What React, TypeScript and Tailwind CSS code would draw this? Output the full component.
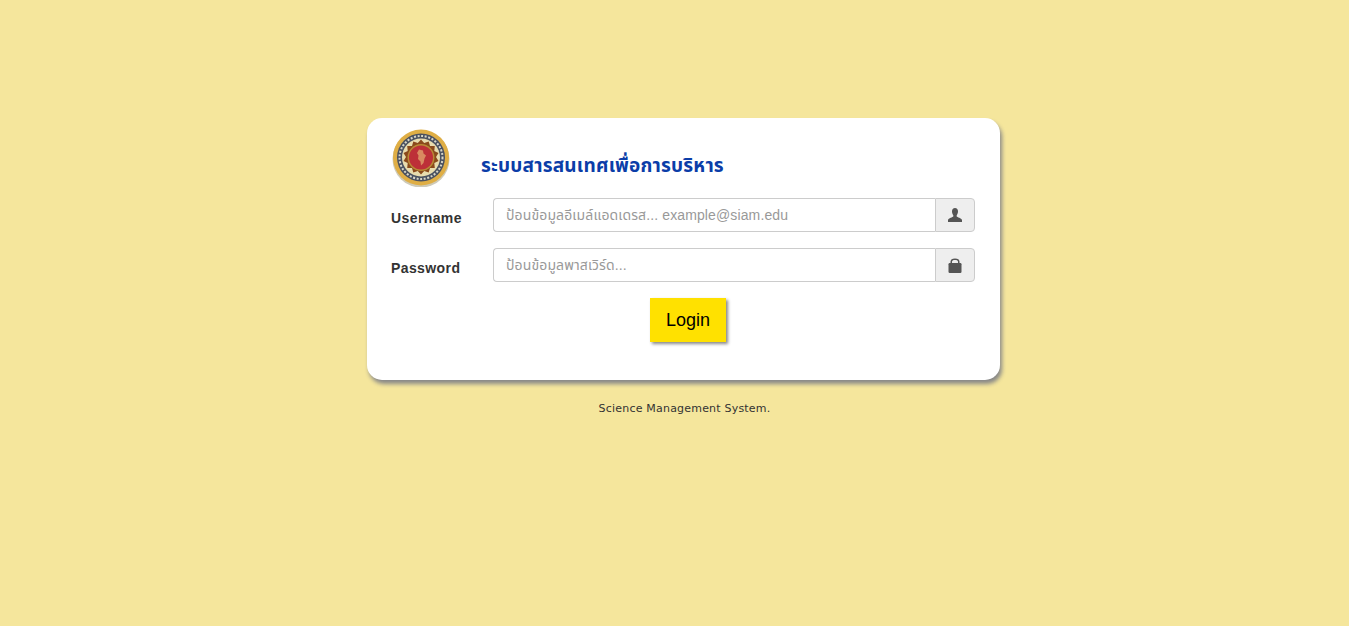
import React from "react";

const thaiStack = "font-['Liberation_Sans','Noto_Sans_Thai','Noto_Sans',sans-serif]";

const Seal = () => (
  <svg width="58" height="58" viewBox="0 0 58 58" className="ml-px blur-[0.6px]">
    <circle cx="29" cy="30" r="28.5" fill="#b9b49a" opacity="0.7" />
    <circle cx="29" cy="28.5" r="28" fill="#dfae45" />
    <circle cx="29" cy="28.5" r="24" fill="#4a5160" />
    <circle cx="29" cy="28.5" r="21.5" fill="none" stroke="#d8d6c6" strokeWidth="2" strokeDasharray="2 1.6" />
    <circle cx="29" cy="28.5" r="19" fill="#e8dcae" />
    <path
      d="M29 10.500l3.200 3.600 4.500-1.700 1.300 4.500 4.800.2-.5 4.800 4.200 2.100-2.500 4 2.500 4-4.200 2.100.5 4.800-4.800.2-1.300 4.500-4.500-1.700-3.200 3.600-3.200-3.600-4.500 1.700-1.300-4.500-4.800-.2.5-4.800-4.200-2.100 2.500-4-2.500-4 4.200-2.100-.5-4.800 4.800-.2 1.300-4.500 4.500 1.700z"
      fill="#8a4a1c"
    />
    <circle cx="29" cy="28.500" r="13.500" fill="#b98a35" />
    <circle cx="29" cy="28.500" r="12" fill="#bd3038" />
    <path d="M27 20.500l4 1 .5 3 2.500 2-1.500 3-1 4.500-2.500 2.500-.5-4-2.500-2.500.5-3.500-1.500-2.500z" fill="#d98a60" />
  </svg>
);

const UserIcon = () => (
  <svg width="14" height="14" viewBox="0 0 14 14" fill="#555">
    <path d="M7 0c1.900 0 3 1.400 3 3.500 0 1.500-.6 2.900-1.300 3.700v1.200c.5.700 4.700 1.500 5.300 3.600v2H0v-2c.6-2.100 4.800-2.900 5.300-3.600V7.200C4.600 6.400 4 5 4 3.500 4 1.400 5.100 0 7 0z" />
  </svg>
);

const LockIcon = () => (
  <svg width="14" height="15" viewBox="0 0 14 15" fill="#555">
    <path d="M2.500 5V3.800C2.500 1.700 4 .5 7 .5s4.500 1.200 4.500 3.300V5H10V3.800c0-1.200-1-1.800-3-1.800s-3 .6-3 1.800V5z" />
    <rect x="0.500" y="5" width="13" height="10" rx="1.200" />
  </svg>
);

const Field = ({ label, placeholder, children }: { label: string; placeholder: string; children: React.ReactNode }) => (
  <div className="flex items-start">
    <label className="w-[102px] shrink-0 pt-[10px] font-['Liberation_Sans',sans-serif] text-[14px] leading-[20px] font-bold tracking-[0.4px] text-[#333]">
      {label}
    </label>
    <div className="flex h-[34px] w-[482px]">
      <input
        placeholder={placeholder}
        className={`h-full min-w-0 flex-1 rounded-l-[4px] border border-r-0 border-[#ccc] bg-white px-3 text-[14px] tracking-[0.12px] text-[#555] outline-none placeholder:text-[#999] ${thaiStack}`}
      />
      <span className="flex w-[40px] items-center justify-center rounded-r-[4px] border border-[#ccc] bg-[#eee]">
        {children}
      </span>
    </div>
  </div>
);

export default function App() {
  return (
    <div className="min-h-[626px] bg-[#f5e69c] pt-[118px]">
      <div className="ml-[367px] h-[262px] w-[633px] rounded-[15px] bg-white pt-[11px] pr-[25px] pl-[24px] shadow-[2px_4px_4px_#888]">
        <div className="flex items-start">
          <Seal />
          <h1 className={`mt-[27px] ml-[31px] text-[19px] leading-[20px] font-bold tracking-[0.2px] text-[#0b3da8] ${thaiStack}`}>
            ระบบสารสนเทศเพื่อการบริหาร
          </h1>
        </div>
        <div className="mt-[11px] flex flex-col gap-[16px]">
          <Field label="Username" placeholder="ป้อนข้อมูลอีเมล์แอดเดรส... example@siam.edu">
            <UserIcon />
          </Field>
          <Field label="Password" placeholder="ป้อนข้อมูลพาสเวิร์ด...">
            <LockIcon />
          </Field>
        </div>
        <div className="mt-[16px] flex justify-center pl-[10px]">
          <button className="h-[44px] w-[76px] bg-[#ffe100] font-['Liberation_Sans',sans-serif] text-[18px] text-black shadow-[2px_2px_3px_#888]">
            Login
          </button>
        </div>
      </div>
      <p className="mt-[22px] ml-[368px] w-[633px] text-center font-['DejaVu_Sans',sans-serif] text-[11px] leading-[14px] tracking-[0.2px] text-[#333]">
        Science Management System.
      </p>
    </div>
  );
}
